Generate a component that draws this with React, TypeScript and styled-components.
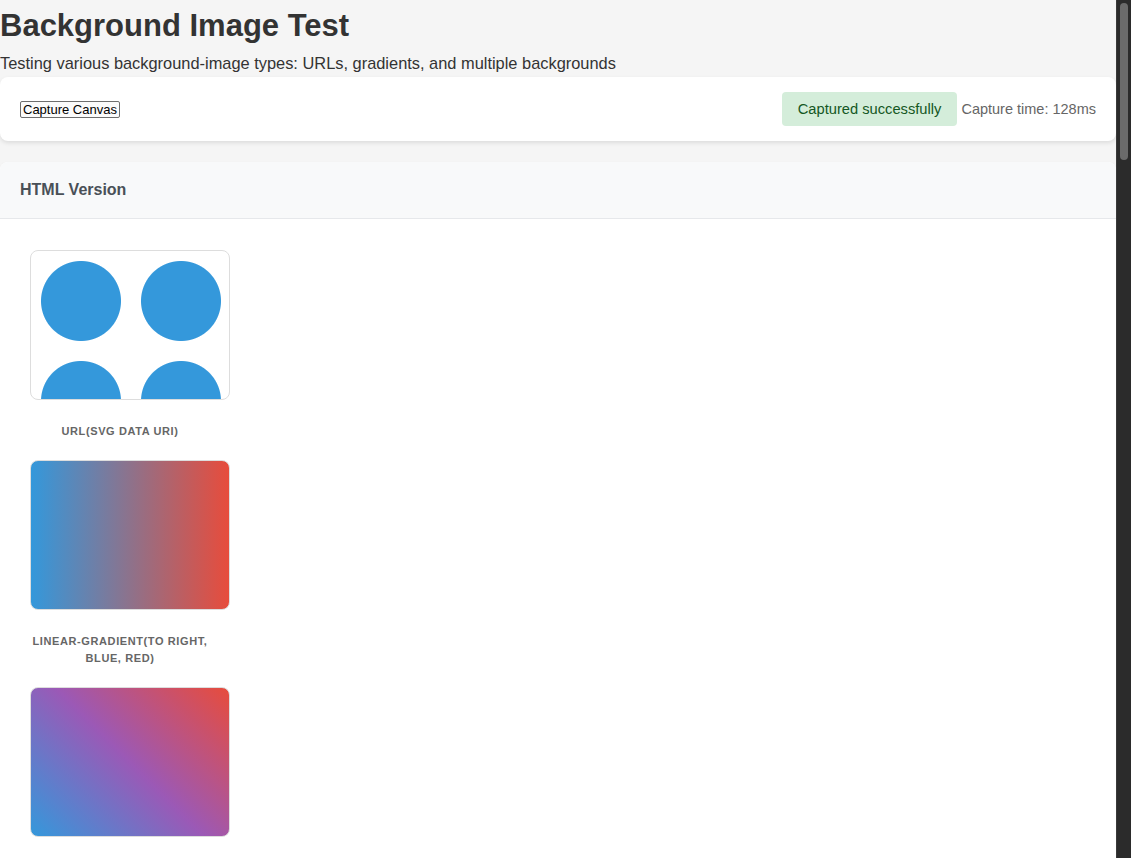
import React from "react";
import styled, { createGlobalStyle } from "styled-components";

const GlobalStyle = createGlobalStyle`
  html, body {
    margin: 0;
    padding: 0;
    background: #f5f5f5;
    font-family: "Liberation Sans", Arial, sans-serif;
    color: #333;
  }
`;

const Page = styled.div`
  margin-right: 15px;
`;

const ScrollTrack = styled.div`
  position: fixed;
  top: 0;
  right: 0;
  width: 15px;
  height: 100vh;
  box-sizing: border-box;
  background: #2b2b2b;
  border-left: 1px solid #3a3a3a;
  display: flex;
  justify-content: center;
  padding-top: 3px;
  z-index: 10;
`;

const ScrollThumb = styled.div`
  width: 8px;
  height: 157px;
  border-radius: 4px;
  background: #6b6b6b;
`;

const Title = styled.h1`
  margin: 8px 0 10px;
  font-size: 31px;
  line-height: 36px;
  font-weight: 700;
  color: #333;
`;

const Subtitle = styled.p`
  margin: 0 0 5px;
  font-size: 16.4px;
  line-height: 18px;
  color: #333;
`;

const ControlCard = styled.div`
  display: flex;
  align-items: center;
  justify-content: space-between;
  background: #fff;
  border-radius: 8px;
  box-shadow: 0 2px 4px rgba(0, 0, 0, 0.1);
  padding: 15px 20px;
`;

const CaptureButton = styled.button`
  font-family: "Liberation Sans", Arial, sans-serif;
  font-size: 13px;
  line-height: 15px;
  color: #000;
  background: #fbfbfb;
  border: 1px solid #6e6e6e;
  border-radius: 2px;
  padding: 0 2px;
  cursor: pointer;
`;

const StatusGroup = styled.div`
  display: flex;
  align-items: center;
  gap: 4px;
`;

const Badge = styled.span`
  display: inline-block;
  padding: 8px 16px;
  font-size: 14.7px;
  line-height: 18px;
  background: #d4edda;
  color: #155724;
  border-radius: 4px;
`;

const Timing = styled.span`
  font-size: 14.5px;
  color: #666;
`;

const Section = styled.section`
  margin-top: 21px;
  background: #fff;
  border-radius: 8px 8px 0 0;
  box-shadow: 0 2px 4px rgba(0, 0, 0, 0.06);
  overflow: hidden;
`;

const SectionHeader = styled.div`
  padding: 16px 20px;
  line-height: 24px;
  background: #f8f9fa;
  border-bottom: 1px solid #e6e8eb;
  font-size: 16px;
  font-weight: 700;
  color: #495057;
`;

const SectionBody = styled.div`
  padding: 21px 20px 20px;
  display: flex;
  flex-direction: column;
`;

const Item = styled.div`
  width: 200px;
  box-sizing: border-box;
  padding: 10px;
`;

const Swatch = styled.div<{ $bg: string; $size?: string }>`
  width: 200px;
  height: 150px;
  box-sizing: border-box;
  border: 1px solid #ddd;
  border-radius: 8px;
  background: ${(p) => p.$bg};
  background-size: ${(p) => p.$size || "auto"};
`;

const Label = styled.div`
  margin-top: 23px;
  font-size: 11px;
  line-height: 17px;
  font-weight: 700;
  text-transform: uppercase;
  letter-spacing: 0.6px;
  color: #666;
  text-align: center;
`;

const items = [
  {
    bg: "radial-gradient(circle at 50px 50px, #3498db 0, #3498db 39.5px, transparent 40.5px)",
    size: "100px 100px",
    label: "url(SVG data URI)",
  },
  {
    bg: "linear-gradient(to right, #3498db, #e74c3c)",
    label: "linear-gradient(to right, blue, red)",
  },
  {
    bg: "linear-gradient(45deg, #3498db, #9b59b6, #e74c3c)",
    label: "linear-gradient(45deg, blue, purple, red)",
  },
];

export default function App() {
  return (
    <Page>
      <GlobalStyle />
      <Title>Background Image Test</Title>
      <Subtitle>
        Testing various background-image types: URLs, gradients, and multiple backgrounds
      </Subtitle>
      <ControlCard>
        <CaptureButton>Capture Canvas</CaptureButton>
        <StatusGroup>
          <Badge>Captured successfully</Badge>
          <Timing>Capture time: 128ms</Timing>
        </StatusGroup>
      </ControlCard>
      <Section>
        <SectionHeader>HTML Version</SectionHeader>
        <SectionBody>
          {items.map((it) => (
            <Item key={it.label}>
              <Swatch $bg={it.bg} $size={it.size} />
              <Label>{it.label}</Label>
            </Item>
          ))}
        </SectionBody>
      </Section>
      <ScrollTrack>
        <ScrollThumb />
      </ScrollTrack>
    </Page>
  );
}
